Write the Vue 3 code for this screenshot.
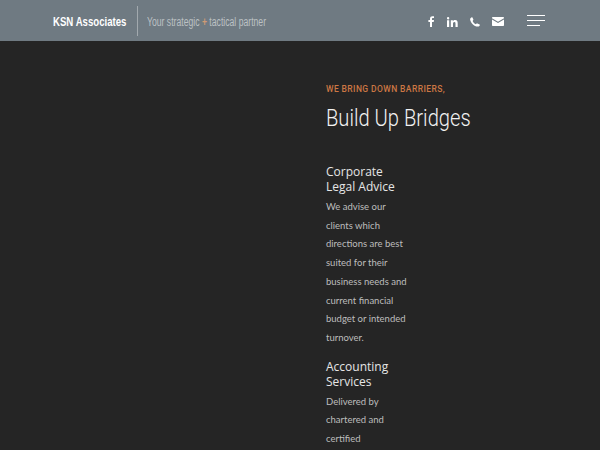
<script setup>
const paragraphs = {
  first: ['We advise our', 'clients which', 'directions are best', 'suited for their', 'business needs and', 'current financial', 'budget or intended', 'turnover.'],
  second: ['Delivered by', 'chartered and', 'certified'],
}
</script>

<template>
  <div class="page">
    <header class="bar">
      <div class="brand">
        <span class="logo"><span class="squeeze logo-text">KSN Associates</span></span>
        <span class="rule"></span>
        <span class="tag"><span class="squeeze tag-text">Your strategic <b>+</b> tactical partner</span></span>
      </div>
      <nav class="social">
        <svg width="7" height="11" viewBox="0 0 7 11"><path d="M2 11V6H.4V4H2V2.7C2 1 3 .2 4.400.2c.7 0 1.300 0 1.600.1v1.800H5c-.8 0-1 .4-1 1V4h2l-.3 2H4v5z" fill="#fff"/></svg>
        <svg width="11" height="10" viewBox="0 0 11 10"><path d="M0 3.300h2.200V10H0zM1.100 0a1.200 1.200 0 1 1 0 2.400 1.200 1.200 0 0 1 0-2.400zM3.800 3.300h2.100v.9c.4-.6 1.100-1.100 2.200-1.100 2.200 0 2.600 1.400 2.600 3.300V10H8.500V6.800c0-.8 0-1.800-1.100-1.800s-1.400.9-1.400 1.800V10H3.800z" fill="#fff"/></svg>
        <svg width="10" height="10" viewBox="0 0 10 10"><path d="M2.300.2 3.400 2.500c.1.200 0 .4-.1.600l-.7.800c.6 1.400 1.900 2.700 3.300 3.400l.8-.8c.2-.2.400-.2.600-.1l2.300 1.200c.3.100.3.400.2.600-.3.900-1.100 1.500-2 1.400C4 9.300.7 6 .1 2.400 0 1.500.7.600 1.700.2c.2-.1.500-.1.600 0z" fill="#fff"/></svg>
        <svg width="12" height="9" viewBox="0 0 12 9"><path d="M1 0h10c.6 0 1 .4 1 1v.3L6 4.800 0 1.300V1c0-.6.4-1 1-1zM0 2.500 6 6l6-3.500V8c0 .6-.4 1-1 1H1c-.6 0-1-.4-1-1z" fill="#fff"/></svg>
      </nav>
      <div class="burger"><i></i><i></i><i></i></div>
    </header>
    <main class="content">
      <p class="eyebrow">WE BRING DOWN BARRIERS,</p>
      <h1 class="title">Build Up Bridges</h1>
      <section class="sec first">
        <h2>Corporate<br>Legal Advice</h2>
        <p v-for="l in paragraphs.first" :key="l">{{ l }}</p>
      </section>
      <section class="sec">
        <h2>Accounting<br>Services</h2>
        <p v-for="l in paragraphs.second" :key="l">{{ l }}</p>
      </section>
    </main>
  </div>
</template>

<style>
html, body { margin: 0; background: #252525; overflow: hidden; }
</style>

<style scoped>
.page { width: 600px; height: 450px; overflow: hidden; background: #252525; }
.bar { height: 41px; background: #6f7a82; display: flex; align-items: center; padding-left: 53px; box-sizing: border-box; }
.brand { display: flex; align-items: center; width: 375px; }
.logo { width: 74px; white-space: nowrap; }
.squeeze { display: inline-block; transform-origin: left center; white-space: nowrap; }
.logo-text { font: 700 13px/16px "Liberation Sans", sans-serif; color: #fff; transform: scaleX(.74); }
.rule { width: 1px; height: 30px; background: #a2a9ae; margin: 0 9px 0 10px; }
.tag { width: 120px; white-space: nowrap; }
.tag-text { font: 400 12px/16px "Liberation Sans", sans-serif; color: #bcc1c4; transform: scaleX(.72); }
.tag b { color: #cf9a74; font-weight: 700; }
.social { display: flex; align-items: center; gap: 12px; padding-top: 2px; }
.burger { margin-left: 23px; width: 18px; display: flex; flex-direction: column; gap: 4px; }
.burger i { display: block; height: 1px; background: #fff; }
.burger i:last-child { width: 13px; }
.content { padding: 42px 0 0 326px; }
.eyebrow { margin: 0; font: 500 8.500px/12px Roboto, sans-serif; letter-spacing: .4px; color: #cc7744; }
.title { margin: 8px 0 0; width: 180px; font: 300 24px/30px Roboto, sans-serif; color: #f2f2f2; transform: scaleX(.84); transform-origin: left center; white-space: nowrap; }
.sec { margin-top: 11px; }
.sec.first { margin-top: 31px; }
.sec h2 { margin: 0 0 4px; font: 400 12px/15px "Open Sans", sans-serif; color: #e6e6e6; }
.sec p { margin: 0; font: 400 9.500px/18.700px Lato, sans-serif; color: #bdbdbd; }
</style>
